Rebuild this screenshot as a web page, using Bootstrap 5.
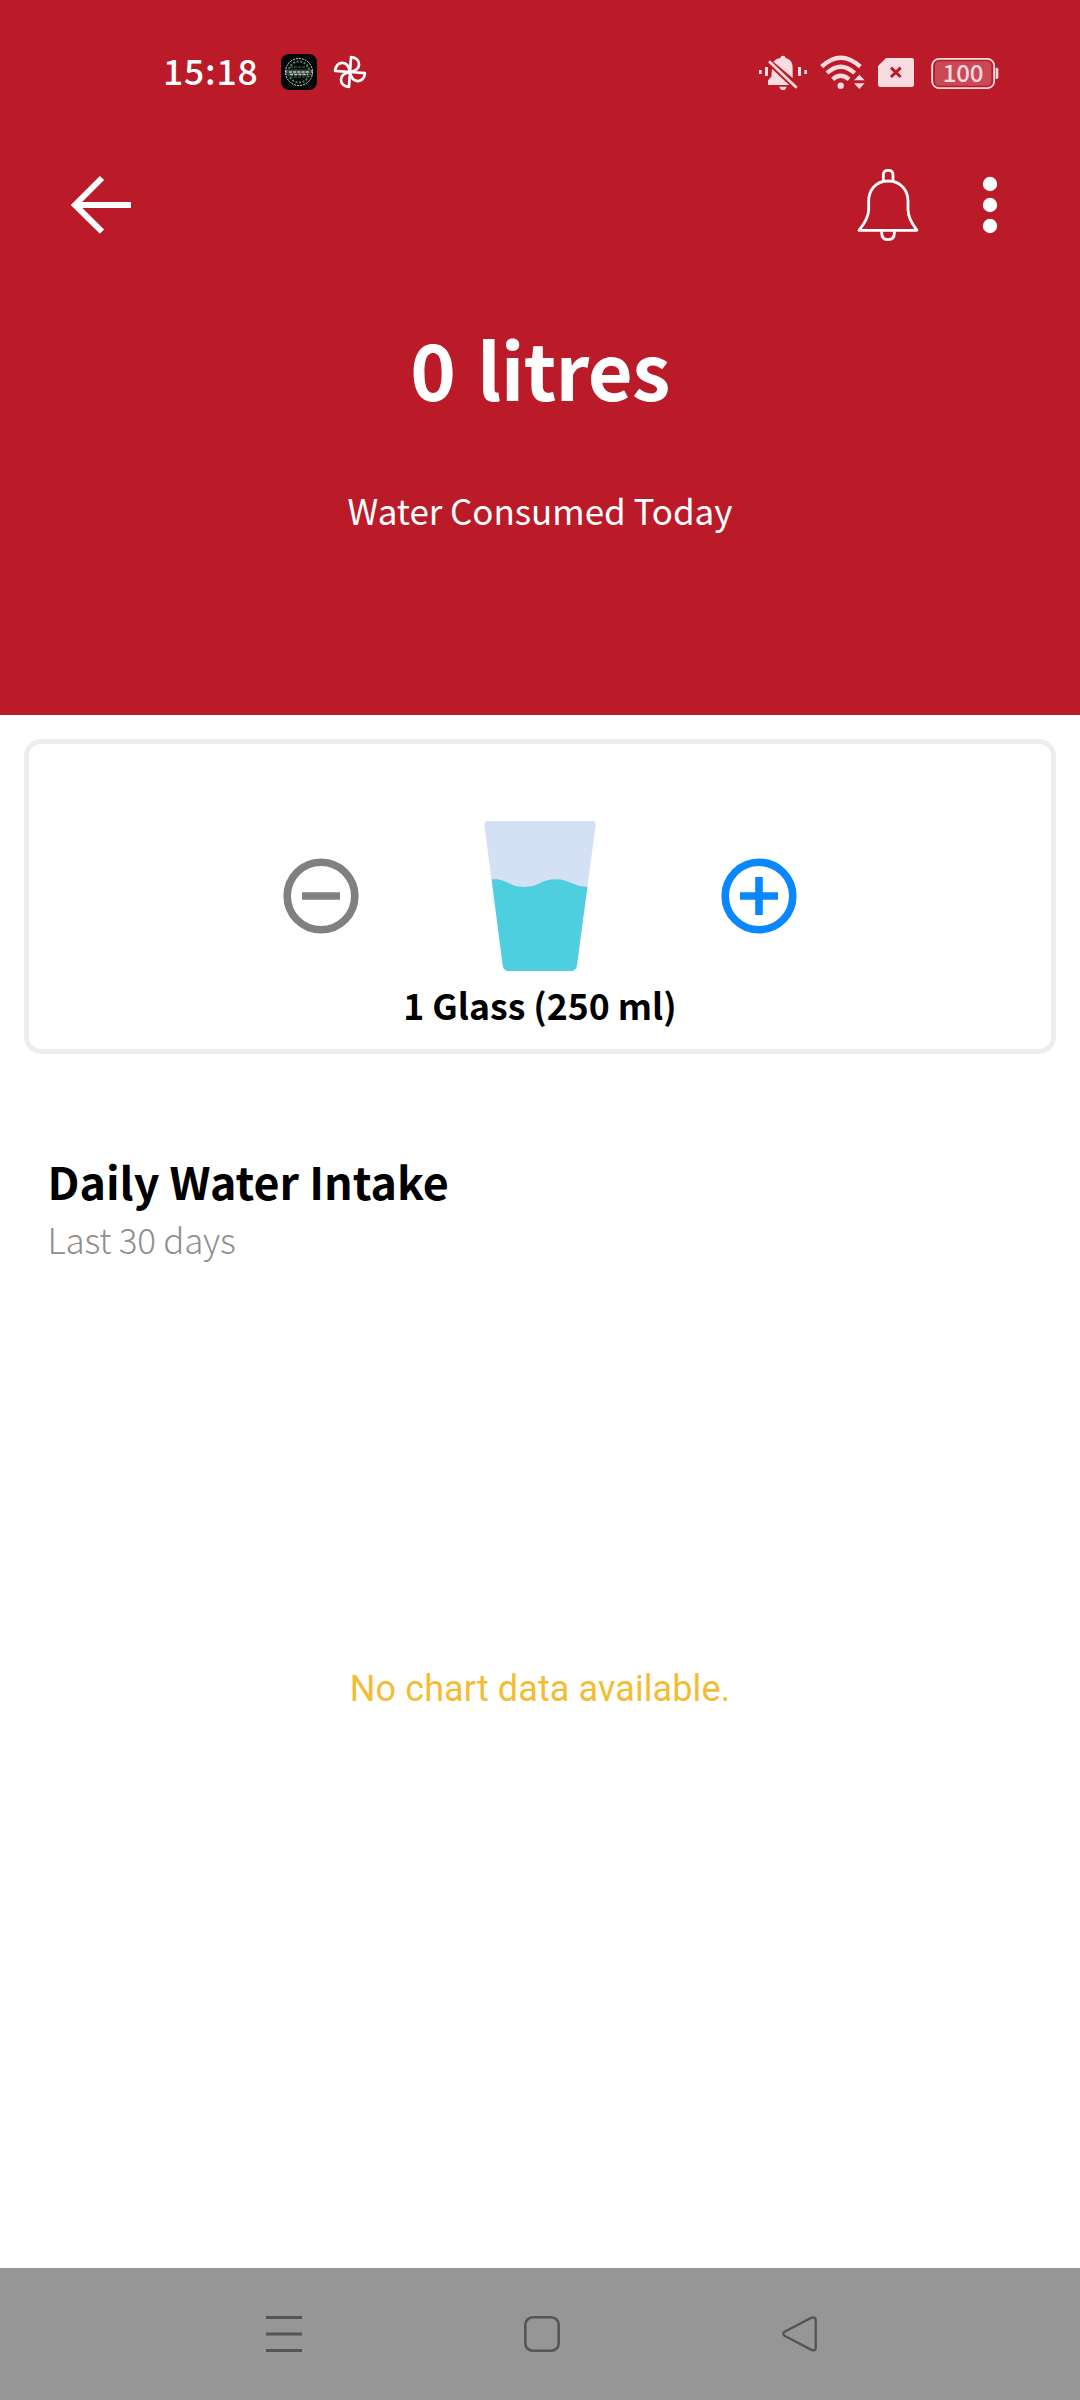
<!DOCTYPE html>
<html lang="en">
<head>
<meta charset="utf-8">
<meta name="viewport" content="width=device-width, initial-scale=1">
<title>Water Intake</title>
<link href="https://cdn.jsdelivr.net/npm/bootstrap@5.3.0/dist/css/bootstrap.min.css" rel="stylesheet">
<style>
body { font-family: "Noto Sans CJK SC", "Noto Sans", sans-serif; color: #000; }
svg { display: block; flex: none; }
.screen { width: 1080px; height: 2400px; }
.hero { background: #bb1a29; height: 715px; }
.status-bar { height: 145px; padding: 0 81px 2px 163px; }
.clock { font-size: 35.5px; font-weight: 500; letter-spacing: .8px; line-height: 50px; margin-right: 22.5px; padding-bottom: 4px; }
.fan { margin-left: 14.5px; }
.signal-icons { gap: 13px; }
.battery { margin-left: 4px; }
.app-bar { height: 120px; padding: 0 60px 0 50px; }
.total { font-size: 77.5px; line-height: 100px; letter-spacing: -.7px; word-spacing: 5px; margin-top: 52px; }
.caption { font-size: 35px; line-height: 50px; letter-spacing: -.05px; margin-top: 68px; }
.intake-card { margin: 24px 24px 0; height: 315px; border: 5px solid #ededed; border-radius: 17px; padding-top: 77px; }
.stepper { gap: 125px; }
.glass-label { font-size: 35.6px; line-height: 44px; margin-top: 11.5px; }
.chart-head { padding: 97px 0 0 47.5px; }
.chart-title { font-size: 44.8px; line-height: 60px; }
.chart-range { font-size: 35px; font-weight: 300; line-height: 50px; letter-spacing: -.25px; color: #8f8f8f; margin-top: 2.5px; }
.chart-area { padding-top: 400px; }
.chart-empty { font-family: Roboto, sans-serif; font-size: 36px; line-height: 50px; letter-spacing: .1px; color: #f4bc35; }
.nav-keys { background: #969696; height: 132px; gap: 222px; padding-left: 4px; }
</style>
</head>
<body>
<div class="screen d-flex flex-column bg-white overflow-hidden">
  <header class="hero text-white flex-shrink-0">
    <div class="status-bar d-flex align-items-center">
      <div class="clock">15:18</div>
      <svg width="36" height="36" viewBox="0 0 36 36">
        <rect width="36" height="36" rx="8" fill="#050807"/>
        <circle cx="18" cy="18" r="13.5" fill="none" stroke="#d5dcd8" stroke-width="1" stroke-dasharray="2 1"/>
        <circle cx="18" cy="18" r="10.5" fill="none" stroke="#4b8060" stroke-width="2" stroke-dasharray="2 1.6"/>
        <path d="M9 13h18M9 23h18" stroke="#486b55" stroke-width="1.2" stroke-dasharray="3 1"/>
        <rect x="6" y="15.5" width="24" height="6" fill="#3c4441"/>
        <path d="M5 16v5M31 16v5M8 18h20M9 20.5h18" stroke="#bcc5c0" stroke-width="1.3" stroke-dasharray="3 1.2"/>
      </svg>
      <svg class="fan" width="36" height="36" viewBox="-18 -18 36 36" fill="none" stroke="#fff" stroke-width="2.7" stroke-linejoin="round">
        <g transform="rotate(4)">
          <path id="blade" d="M0 0V-15C5 -15 8.500 -12 8.500 -8C8.500 -4.500 6 -1.500 0 0Z"/>
          <use href="#blade" transform="rotate(90)"/>
          <use href="#blade" transform="rotate(180)"/>
          <use href="#blade" transform="rotate(270)"/>
        </g>
      </svg>
      <div class="signal-icons d-flex align-items-center ms-auto">
        <svg width="48" height="36" viewBox="57 39 144 108" fill="#f9dce0">
          <path d="M57 87h8v12h-8zM75 78h9v27h-9zM174 78h9v27h-9zM193 87h8v12h-8zM118 137h22q-3 10-11 10t-11-10z"/>
          <path d="M100 62Q107 53 121 51Q122 44 129 44T137 51Q158 57 158 79V111L100 62ZM97 75L158 132H84V118L94 107Z"/>
          <path d="M86 65L168 142" stroke="#bb1a29" stroke-width="13" fill="none"/>
          <path d="M87 61L170 140" stroke="#f9dce0" stroke-width="8" fill="none"/>
        </svg>
        <svg width="45" height="36" viewBox="242 39 135 108">
          <g fill="none" stroke="#f9dce0" stroke-width="13">
            <path d="M247 77Q304 23 363 77"/><path d="M263 96Q304 58 346 96"/><path d="M280 115Q304 94 329 115"/>
          </g>
          <g fill="#f9dce0"><circle cx="304" cy="134" r="9.500"/><path d="M344 118L360 101L376 118ZM344 127H376L360 144Z"/></g>
        </svg>
        <svg width="36" height="36" viewBox="417 39 108 108">
          <path d="M441 51H518Q525 51 525 58V130Q525 138 518 138H424Q417 138 417 130V75Z" fill="#f9dce0"/>
          <path d="M456 80L485 108M485 80L456 108" stroke="#bb1a29" stroke-width="9"/>
        </svg>
        <svg class="battery" width="68" height="36" viewBox="575 39 204 108">
          <rect x="578.500" y="53.500" width="186" height="88" rx="21" fill="none" stroke="#f9dce0" stroke-width="5.500"/>
          <rect x="587" y="61" width="169" height="73" rx="13" fill="#cb4855"/>
          <path d="M769 80h3q5 0 5 5v24q0 5-5 5h-3z" fill="#f9dce0"/>
          <text x="671" y="124" text-anchor="middle" textLength="122" font-family="Noto Sans CJK SC, sans-serif" font-size="72" font-weight="500" fill="#f9dce0">100</text>
        </svg>
      </div>
    </div>
    <div class="app-bar d-flex align-items-center">
      <svg width="120" height="110" viewBox="0 0 360 330" fill="none" stroke="#fff" stroke-width="18">
        <path d="M243 165H80M156 84L75 165L156 245"/>
      </svg>
      <svg class="ms-auto" width="180" height="110" viewBox="0 0 540 330">
        <g fill="none" stroke="#fff" stroke-width="8.500" stroke-linejoin="round">
          <path d="M130 93V74Q130 61 144.500 61T159 74V93"/>
          <path d="M144.500 93C104 93 86 124 86 154V179C86 198 76 217 57 241H231C213 217 204 198 204 179V154C204 124 185 93 144.500 93Z"/>
          <path d="M125 243V250Q126 269 144.500 269T163 250V243"/>
        </g>
        <g fill="#fff"><circle cx="450" cy="102" r="21.500"/><circle cx="450" cy="165" r="21.500"/><circle cx="450" cy="228" r="21.500"/></g>
      </svg>
    </div>
    <div class="total fw-bold text-center">0 litres</div>
    <div class="caption text-center">Water Consumed Today</div>
  </header>

  <section class="intake-card flex-shrink-0">
    <div class="stepper d-flex justify-content-center align-items-center">
      <svg width="76" height="76" viewBox="-38 -38 76 76" fill="none" stroke="#808080" stroke-width="7.600">
        <circle r="33.800"/><path d="M-19 0H19"/>
      </svg>
      <svg width="112" height="150" viewBox="313 93 336 450">
        <path d="M324 93H638Q649 93 648 105L592 525Q590 543 572 543H388Q371 543 369 525L314 105Q313 93 324 93Z" fill="#d4e0f3"/>
        <path d="M336 268C382 264 386 291 432 291C482 291 480 268 530 268C568 268 583 291 623 291L592 525Q590 543 572 543H388Q371 543 369 525Z" fill="#4dcfe0"/>
      </svg>
      <svg width="76" height="76" viewBox="-38 -38 76 76" fill="none" stroke="#0a87ff" stroke-width="7.600">
        <circle r="33.800"/><path d="M-19 0H19M0 -19V19"/>
      </svg>
    </div>
    <div class="glass-label fw-bold text-center">1 Glass (250 ml)</div>
  </section>

  <section class="chart-head flex-shrink-0">
    <div class="chart-title fw-bold">Daily Water Intake</div>
    <div class="chart-range">Last 30 days</div>
  </section>
  <section class="chart-area flex-grow-1 d-flex align-items-start justify-content-center">
    <div class="chart-empty">No chart data available.</div>
  </section>

  <nav class="nav-keys d-flex align-items-center justify-content-center flex-shrink-0">
    <svg width="36" height="36" viewBox="0 0 36 36"><path d="M0 1.500H36M0 18H36M0 34.500H36" stroke="#555" stroke-width="3"/></svg>
    <svg width="36" height="36" viewBox="0 0 36 36"><rect x="1.300" y="1.300" width="33.400" height="33.400" rx="7.500" fill="none" stroke="#555" stroke-width="2.600"/></svg>
    <svg width="36" height="36" viewBox="0 0 36 36"><path d="M2.500 15.800L29.500 1.700Q33.700 0.500 33.700 4.500V31.500Q33.700 35.500 29.500 33.800L2.500 19.700Q0 17.800 2.500 15.800Z" fill="none" stroke="#555" stroke-width="2.400"/></svg>
  </nav>
</div>
<script src="https://cdn.jsdelivr.net/npm/bootstrap@5.3.0/dist/js/bootstrap.bundle.min.js"></script>
</body>
</html>
